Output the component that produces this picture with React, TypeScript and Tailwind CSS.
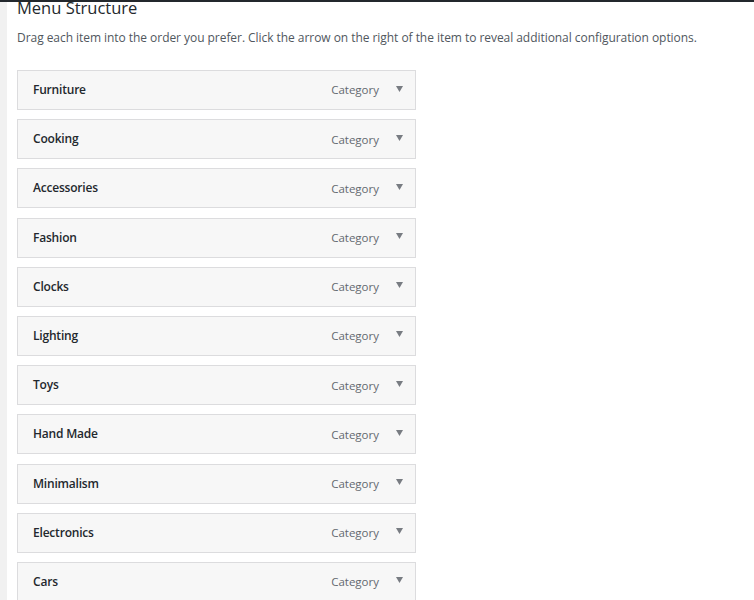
const items = [
  "Furniture",
  "Cooking",
  "Accessories",
  "Fashion",
  "Clocks",
  "Lighting",
  "Toys",
  "Hand Made",
  "Minimalism",
  "Electronics",
  "Cars",
];

export default function App() {
  return (
    <div className="h-[600px] w-[754px] overflow-hidden bg-white font-['Open_Sans','Noto_Sans',sans-serif] text-[#1d2327]">
      <div className="h-[2px] bg-[#23282d]" />
      <div className="flex h-[598px]">
        <div className="w-[7px] shrink-0 bg-[#f1f1f1]" />
        <div className="flex-1 pl-[10px] overflow-hidden">
          <h3 className="-mt-[4px] text-[16.5px] leading-[20px] font-normal text-[#23282d]">Menu Structure</h3>
          <p className="mt-[11px] whitespace-nowrap text-[12px] tracking-[-0.05px] leading-[18px] text-[#50575e]">
            Drag each item into the order you prefer. Click the arrow on the right of the item to reveal additional configuration options.
          </p>
          <ul className="mt-[23px] flex flex-col gap-[9.2px]">
            {items.map((name) => (
              <li
                key={name}
                className="flex h-[40px] w-[399px] items-center border border-[#dcdcde] bg-[#f7f7f7] pl-[15px] pr-[12px]"
              >
                <span className="flex-1 text-[12px] font-semibold tracking-[-0.2px] text-[#23282d]">{name}</span>
                <span className="mr-[1px] text-[11.5px] text-[#646970]">Category</span>
                <svg width="7" height="6" viewBox="0 0 7 6" className="ml-[16px] mb-[3px]">
                  <path d="M0 0 L7 0 L3.5 6 Z" fill="#787c82" />
                </svg>
              </li>
            ))}
          </ul>
        </div>
      </div>
    </div>
  );
}
